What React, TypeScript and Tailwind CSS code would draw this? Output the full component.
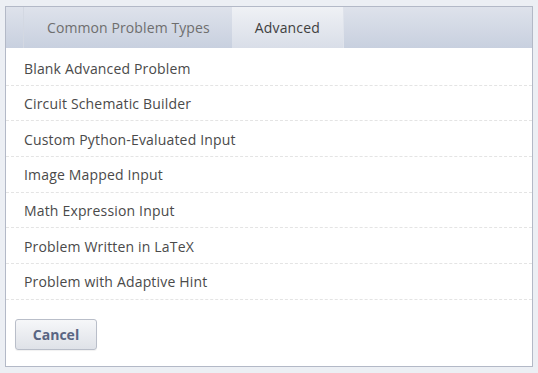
import React from "react";

const items = [
  "Blank Advanced Problem",
  "Circuit Schematic Builder",
  "Custom Python-Evaluated Input",
  "Image Mapped Input",
  "Math Expression Input",
  "Problem Written in LaTeX",
  "Problem with Adaptive Hint",
];

export default function App() {
  return (
    <div
      className="w-[538px] h-[373px] bg-[#eceff4] pt-[6px] pl-[5px]"
      style={{ fontFamily: '"Open Sans", sans-serif' }}
    >
      <div className="w-[528px] h-[361px] bg-white border border-[#b3b9c7] flex flex-col">
        <div className="h-[41px] flex pl-[17px] bg-gradient-to-b from-[#dee2eb] to-[#c8d0df]">
          <div className="h-full flex items-center pl-[23px] pr-[22px] text-[14px] tracking-[0.1px] text-[#6e6e6e] border-l border-[#d3d8e2]">
            Common Problem Types
          </div>
          <div className="h-full flex items-center pl-[23px] pr-[23px] text-[14px] tracking-[0.15px] text-[#3f3f3f] bg-gradient-to-b from-[#eff1f5] to-[#d9dee8] border-r border-[#dfe3eb]">
            Advanced
          </div>
        </div>
        <div className="pt-[2px]">
          {items.map((t, i) => (
            <div
              key={t}
              className="h-[35.7px] flex items-center pl-[18px] text-[14px] tracking-[0.17px] text-[#4a4a4a] border-b border-dashed border-[#e4e4e4]"
            >
              <span className={i === 0 ? "mt-[3px]" : "mt-[1px]"}>{t}</span>
            </div>
          ))}
        </div>
        <div className="pt-[19px] pl-[9px]">
          <button className="w-[82px] h-[31px] rounded-[3px] border border-[#b9bec9] bg-gradient-to-b from-[#f6f7f9] to-[#dfe2e8] text-[14px] font-bold text-[#596582] shadow-[0_1px_1px_rgba(0,0,0,0.06)]">
            Cancel
          </button>
        </div>
      </div>
    </div>
  );
}
